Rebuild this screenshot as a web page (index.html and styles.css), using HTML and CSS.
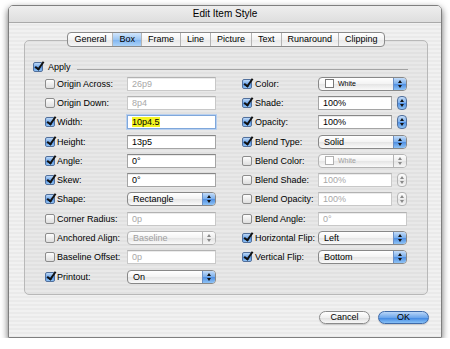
FILE: index.html
```html
<!DOCTYPE html>
<html lang="en">
<head>
    <meta charset="UTF-8">
    <title>Edit Item Style</title>
    <link rel="stylesheet" href="styles.css">
</head>
<body>
    <div class="window">
        <div class="titlebar">Edit Item Style</div>
        <div class="content">
            <div class="tabs">
                <span class="tab">General</span>
                <span class="tab active">Box</span>
                <span class="tab">Frame</span>
                <span class="tab">Line</span>
                <span class="tab">Picture</span>
                <span class="tab">Text</span>
                <span class="tab">Runaround</span>
                <span class="tab">Clipping</span>
            </div>

            <div class="group">
                <div class="apply">
                    <span class="cb on"></span>
                    <span>Apply</span>
                    <span class="rule"></span>
                </div>

                <div class="columns">
                    <div class="col left">
                        <span class="cb"></span><span>Origin Across:</span><span class="field off">26p9</span>
                        <span class="cb"></span><span>Origin Down:</span><span class="field off">8p4</span>
                        <span class="cb on"></span><span>Width:</span><span class="field focus"><span class="hl">10p4.5</span></span>
                        <span class="cb on"></span><span>Height:</span><span class="field">13p5</span>
                        <span class="cb on"></span><span>Angle:</span><span class="field">0°</span>
                        <span class="cb on"></span><span>Skew:</span><span class="field">0°</span>
                        <span class="cb on"></span><span>Shape:</span><span class="popup">Rectangle<span class="arrows"></span></span>
                        <span class="cb"></span><span>Corner Radius:</span><span class="field off">0p</span>
                        <span class="cb"></span><span>Anchored Align:</span><span class="popup off">Baseline<span class="arrows"></span></span>
                        <span class="cb"></span><span>Baseline Offset:</span><span class="field off">0p</span>
                        <span class="cb on"></span><span>Printout:</span><span class="popup">On<span class="arrows"></span></span>
                    </div>

                    <div class="col right">
                        <span class="cb on"></span><span>Color:</span>
                        <span class="popup color"><span class="swatch"></span><span class="small">White</span><span class="arrows"></span></span>
                        <span class="cb on"></span><span>Shade:</span>
                        <span class="spin"><span class="field">100%</span><span class="stepper"></span></span>
                        <span class="cb on"></span><span>Opacity:</span>
                        <span class="spin"><span class="field">100%</span><span class="stepper"></span></span>
                        <span class="cb on"></span><span>Blend Type:</span><span class="popup">Solid<span class="arrows"></span></span>
                        <span class="cb"></span><span>Blend Color:</span>
                        <span class="popup color off"><span class="swatch"></span><span class="small">White</span><span class="arrows"></span></span>
                        <span class="cb"></span><span>Blend Shade:</span>
                        <span class="spin"><span class="field off">100%</span><span class="stepper off"></span></span>
                        <span class="cb"></span><span>Blend Opacity:</span>
                        <span class="spin"><span class="field off">100%</span><span class="stepper off"></span></span>
                        <span class="cb"></span><span>Blend Angle:</span><span class="field off">0°</span>
                        <span class="cb on"></span><span>Horizontal Flip:</span><span class="popup">Left<span class="arrows"></span></span>
                        <span class="cb on"></span><span>Vertical Flip:</span><span class="popup">Bottom<span class="arrows"></span></span>
                    </div>
                </div>
            </div>

            <div class="buttons">
                <button class="btn">Cancel</button>
                <button class="btn default">OK</button>
            </div>
        </div>
    </div>
</body>
</html>
```

FILE: styles.css
```css
body {
    margin: 0;
    background: #fff;
    font-family: "Liberation Sans", Arial, sans-serif;
    font-size: 9px;
    color: #000;
}
.window {
    margin: 5px 0 0 8px;
    width: 434px;
    height: 333px;
    box-sizing: border-box;
    border: 1px solid #7f7f7f;
    border-radius: 5px 5px 0 0;
    background: repeating-linear-gradient(to bottom, #f1f1f1 0, #f1f1f1 2px, #eaeaea 2px, #eaeaea 4px);
    box-shadow: 0 3px 7px rgba(0, 0, 0, 0.6);
    display: flex;
    flex-direction: column;
}
.titlebar {
    height: 16px;
    line-height: 16px;
    text-align: center;
    font-size: 10px;
    border-bottom: 1px solid #a9a9a9;
    border-radius: 4px 4px 0 0;
    background: linear-gradient(#eeeeee, #dedede);
}
.content {
    padding: 9px 13px 0 15px;
    display: flex;
    flex-direction: column;
}

/* tab strip */
.tabs {
    align-self: center;
    display: flex;
    height: 15px;
    box-sizing: border-box;
    border: 1px solid #8a8a8a;
    border-radius: 4px;
    overflow: hidden;
    background: linear-gradient(#ffffff, #f3f3f3 50%, #e7e7e7 50%, #f5f5f5);
    position: relative;
    z-index: 1;
    margin-bottom: -7px;
}
.tab {
    padding: 0 6px;
    line-height: 13px;
    border-left: 1px solid #b4b4b4;
}
.tab:first-child {
    border-left: 0;
}
.tab.active {
    background: linear-gradient(#d2e6fc, #9cc6f3 50%, #7cb2ef 50%, #acd3f8);
}

/* group box */
.group {
    border: 1px solid #b8b8b8;
    border-radius: 5px;
    background: rgba(0, 0, 0, 0.035);
    padding: 18px 19px 8px 8px;
}
.apply {
    display: flex;
    align-items: center;
    gap: 5px;
    height: 15px;
}
.apply .rule {
    flex: 1;
    height: 1px;
    background: #a3a3a3;
    align-self: flex-end;
    margin: 0 0 4px 1px;
}
.columns {
    display: flex;
    gap: 26px;
    margin-left: 12px;
}
.col {
    display: grid;
    grid-auto-rows: 19.3px;
    align-items: center;
}
.col.left {
    grid-template-columns: 12px 70px 89px;
}
.col.right {
    grid-template-columns: 13px 63px 89px;
}

/* checkbox */
.cb {
    width: 10px;
    height: 10px;
    box-sizing: border-box;
    border: 1px solid #8c8c8c;
    border-radius: 2px;
    background: linear-gradient(#fdfdfd, #dedede);
    position: relative;
}
.cb.on {
    border-color: #52709c;
    background: linear-gradient(#bcd8f7, #6ea5e8 50%, #4f8fe2 50%, #90c2f4);
}
.cb.on::after {
    content: "";
    position: absolute;
    left: 3px;
    top: -3px;
    width: 3px;
    height: 8px;
    border: solid #111;
    border-width: 0 2px 2px 0;
    transform: rotate(35deg);
}

/* text fields */
.field {
    height: 14px;
    box-sizing: border-box;
    border: 1px solid #a5a5a5;
    border-top-color: #868686;
    background: #fff;
    box-shadow: inset 0 1px 0 rgba(0, 0, 0, 0.08);
    padding: 0 4px;
    line-height: 12px;
}
.field.off {
    color: #a8a8a8;
    border-color: #c8c8c8;
    border-top-color: #b2b2b2;
}
.field.focus {
    border-color: #7fa7db;
    box-shadow: 0 0 0 1px #b8d0ef;
}
.hl {
    background: #f4f422;
}
.spin {
    display: flex;
    align-items: center;
    gap: 5px;
}
.spin .field {
    flex: 1;
}

/* popup menus */
.popup {
    height: 14px;
    box-sizing: border-box;
    border: 1px solid #888;
    border-radius: 4px;
    background: linear-gradient(#ffffff, #f3f3f3 50%, #e4e4e4 50%, #fafafa);
    display: flex;
    align-items: center;
    padding-left: 5px;
    line-height: 12px;
    overflow: hidden;
}
.popup.off {
    color: #a0a0a0;
    border-color: #b4b4b4;
}
.popup.color {
    padding-left: 6px;
}
.swatch {
    width: 9px;
    height: 9px;
    box-sizing: border-box;
    border: 1px solid #777;
    background: #fff;
    margin-right: 4px;
}
.popup.off .swatch {
    border-color: #b0b0b0;
}
.small {
    font-size: 7px;
}
.arrows,
.stepper {
    display: flex;
    flex-direction: column;
    align-items: center;
    justify-content: center;
    gap: 2px;
    background: linear-gradient(#c4dcf8, #79aeec 50%, #4d8de2 50%, #8fc3f5);
}
.arrows {
    margin-left: auto;
    width: 12px;
    align-self: stretch;
    border-left: 1px solid #6b8fc4;
}
.stepper {
    width: 10px;
    height: 14px;
    box-sizing: border-box;
    border: 1px solid #52709c;
    border-radius: 4px;
}
.arrows::before,
.stepper::before {
    content: "";
    border: 2px solid transparent;
    border-top: 0;
    border-bottom: 3px solid #111;
}
.arrows::after,
.stepper::after {
    content: "";
    border: 2px solid transparent;
    border-bottom: 0;
    border-top: 3px solid #111;
}
.popup.off .arrows,
.stepper.off {
    background: linear-gradient(#fdfdfd, #ededed 50%, #e2e2e2 50%, #f6f6f6);
    border-color: #b4b4b4;
}
.popup.off .arrows::before,
.stepper.off::before {
    border-bottom-color: #888;
}
.popup.off .arrows::after,
.stepper.off::after {
    border-top-color: #888;
}

/* buttons */
.buttons {
    display: flex;
    justify-content: flex-end;
    gap: 8px;
    margin: 16px -1px 0 0;
}
.btn {
    width: 51px;
    height: 13px;
    padding: 0;
    font: inherit;
    line-height: 11px;
    border: 1px solid #8b8b8b;
    border-radius: 7px;
    background: linear-gradient(#ffffff, #f0f0f0 50%, #dedede 50%, #f8f8f8);
    box-shadow: 0 1px 1px rgba(0, 0, 0, 0.15);
    color: #000;
}
.btn.default {
    border-color: #3f6aa8;
    background: linear-gradient(#b9d6f8, #6ea7ec 50%, #3c83e0 50%, #86c0f6);
}
```
